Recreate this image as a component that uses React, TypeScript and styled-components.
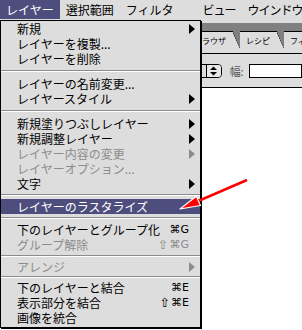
import React from "react"
import styled, { createGlobalStyle } from "styled-components"

const Global = createGlobalStyle`
  *, *::before, *::after {
    box-sizing: border-box;
  }
  html, body {
    margin: 0;
    padding: 0;
    background: #fff;
    overflow: hidden;
  }
`

const Screen = styled.div`
  position: relative;
  width: 302px;
  height: 330px;
  overflow: hidden;
  background: #fff;
  font-family: "Noto Sans CJK JP", "Noto Sans", sans-serif;
`

const MenuBar = styled.div`
  display: flex;
  height: 20px;
  background: #dddddd;
  font-size: 12px;
  white-space: nowrap;
`

const MenuTitle = styled.div<{ $active?: boolean; $ml?: number; $ls?: number }>`
  display: flex;
  align-items: center;
  height: 19px;
  padding: 0 6px;
  margin-left: ${({ $ml }) => $ml || 0}px;
  letter-spacing: ${({ $ls }) => $ls || 0}px;
  background: ${({ $active }) => ($active ? "#4e4e7e" : "transparent")};
  color: ${({ $active }) => ($active ? "#fff" : "#000")};
`

const Palette = styled.div`
  display: flex;
  flex-direction: column;
  height: 310px;
`

const TopStrip = styled.div`
  height: 3px;
  background: #dddddd;
`

const Band = styled.div`
  height: 8px;
  background: #808080;
`

const TabRow = styled.div`
  display: flex;
  height: 17px;
  padding-left: 188px;
  background: #808080;
`

const Tab = styled.div`
  position: relative;
  display: flex;
  align-items: center;
  height: 17px;
  padding: 0 14px 0 6px;
  background: #dddddd;
  border-top: 1px solid #000;
  font-size: 8px;
  white-space: nowrap;
  clip-path: polygon(0 0, calc(100% - 7px) 0, 100% 100%, 0 100%);
  &::after {
    content: "";
    position: absolute;
    top: 0;
    right: 0;
    width: 7px;
    height: 100%;
    background: linear-gradient(
      to top right,
      transparent calc(50% - 0.8px),
      #000 50%,
      transparent calc(50% + 0.8px)
    );
  }
`

const TabBase = styled.div`
  height: 6px;
  background: #dddddd;
  border-bottom: 1px solid #000;
`

const Toolbar = styled.div`
  display: flex;
  align-items: center;
  height: 34px;
  padding-left: 186px;
  background: #dddddd;
  border-bottom: 1px solid #000;
`

const Popup = styled.div`
  display: flex;
  justify-content: flex-end;
  width: 40px;
  height: 14px;
  background: #dddddd;
  border: 1px solid #000;
  border-radius: 0 4px 4px 0;
`

const Stepper = styled.div`
  display: flex;
  align-items: center;
  justify-content: center;
  width: 15px;
  border-left: 1px solid #000;
  background: #e8e8e8;
  border-radius: 0 3px 3px 0;
`

const FieldLabel = styled.span`
  margin-left: 8px;
  font-size: 11px;
  color: #555;
`

const Field = styled.div`
  width: 60px;
  height: 14px;
  margin-left: 5px;
  background: #fff;
  border: 1px solid #000;
`

const Canvas = styled.div`
  flex: 1;
  background: #fff;
`

const Menu = styled.div`
  position: absolute;
  top: 20px;
  left: 0;
  width: 201px;
  padding-bottom: 2px;
  background: #dddddd;
  border: 1px solid #000;
  box-shadow: 1px 1px 0 #000;
`

const Row = styled.div<{ $disabled?: boolean; $active?: boolean }>`
  display: flex;
  align-items: center;
  height: 15px;
  padding: 0 5px 0 16px;
  font-size: 12px;
  line-height: 15px;
  white-space: nowrap;
  background: ${({ $active }) => ($active ? "#4e4e7e" : "transparent")};
  color: ${({ $active, $disabled }) =>
    $active ? "#fff" : $disabled ? "#8c8c8c" : "#000"};
`

const Label = styled.span`
  flex: 1;
`

const Key = styled.span`
  display: flex;
  align-items: center;
  padding-right: 6px;
  font-family: "DejaVu Sans", sans-serif;
  font-size: 11px;
`

const Shift = styled.span`
  font-size: 13px;
  margin-right: 1px;
`

const Submenu = styled.span`
  width: 0;
  height: 0;
  border-left: 6px solid currentColor;
  border-top: 5px solid transparent;
  border-bottom: 5px solid transparent;
`

const Separator = styled.div<{ $h: number }>`
  display: flex;
  align-items: center;
  height: ${({ $h }) => $h}px;
  &::before {
    content: "";
    flex: 1;
    height: 2px;
    border-top: 1px solid #8c8c8c;
    border-bottom: 1px solid #fff;
  }
`

const Pointer = styled.svg`
  position: absolute;
  top: 0;
  left: 0;
  pointer-events: none;
`

type Item =
  | { sep: number }
  | {
      label: string
      sub?: boolean
      shift?: boolean
      keys?: string
      disabled?: boolean
      active?: boolean
    }

const items: Item[] = [
  { label: "新規", sub: true },
  { label: "レイヤーを複製..." },
  { label: "レイヤーを削除" },
  { sep: 10 },
  { label: "レイヤーの名前変更..." },
  { label: "レイヤースタイル", sub: true },
  { sep: 10 },
  { label: "新規塗りつぶしレイヤー", sub: true },
  { label: "新規調整レイヤー", sub: true },
  { label: "レイヤー内容の変更", sub: true, disabled: true },
  { label: "レイヤーオプション...", disabled: true },
  { label: "文字", sub: true },
  { sep: 8 },
  { label: "レイヤーのラスタライズ", active: true },
  { sep: 8 },
  { label: "下のレイヤーとグループ化", keys: "⌘G" },
  { label: "グループ解除", shift: true, keys: "⌘G", disabled: true },
  { sep: 7 },
  { label: "アレンジ", sub: true, disabled: true },
  { sep: 6 },
  { label: "下のレイヤーと結合", keys: "⌘E" },
  { label: "表示部分を結合", shift: true, keys: "⌘E" },
  { label: "画像を統合" },
]

const App = () => {
  return (
    <Screen>
      <Global />
      <MenuBar>
        <MenuTitle $active>レイヤー</MenuTitle>
        <MenuTitle>選択範囲</MenuTitle>
        <MenuTitle>フィルタ</MenuTitle>
        <MenuTitle $ml={17} $ls={-1}>ビュー</MenuTitle>
        <MenuTitle $ls={-1}>ウインドウ</MenuTitle>
      </MenuBar>

      <Palette>
        <TopStrip />
        <Band />
        <TabRow>
          <Tab>ブラウザ</Tab>
          <Tab>レシピ</Tab>
          <Tab>フィルタ</Tab>
        </TabRow>
        <TabBase />
        <Toolbar>
          <Popup>
            <Stepper>
              <svg width="7" height="10" viewBox="0 0 7 10">
                <polygon points="0,4 3.5,0.5 7,4" fill="#000" />
                <polygon points="0,6 3.5,9.5 7,6" fill="#000" />
              </svg>
            </Stepper>
          </Popup>
          <FieldLabel>幅:</FieldLabel>
          <Field />
        </Toolbar>
        <Canvas />
      </Palette>

      <Menu>
        {items.map((item, i) =>
          "sep" in item ? (
            <Separator key={i} $h={item.sep} />
          ) : (
            <Row key={i} $disabled={item.disabled} $active={item.active}>
              <Label>{item.label}</Label>
              {item.keys && (
                <Key>
                  {item.shift && <Shift>⇧</Shift>}
                  {item.keys}
                </Key>
              )}
              {item.sub && <Submenu />}
            </Row>
          )
        )}
      </Menu>

      <Pointer width="302" height="330" viewBox="0 0 302 330">
        <line x1="247" y1="180" x2="196" y2="202" stroke="#ff0000" strokeWidth="2.5" />
        <polygon
          points="180,209 200.5,205.5 196.3,196.3"
          fill="#ff0000"
          stroke="#fff"
          strokeWidth="1.2"
          strokeLinejoin="round"
        />
      </Pointer>
    </Screen>
  )
}

export default App
